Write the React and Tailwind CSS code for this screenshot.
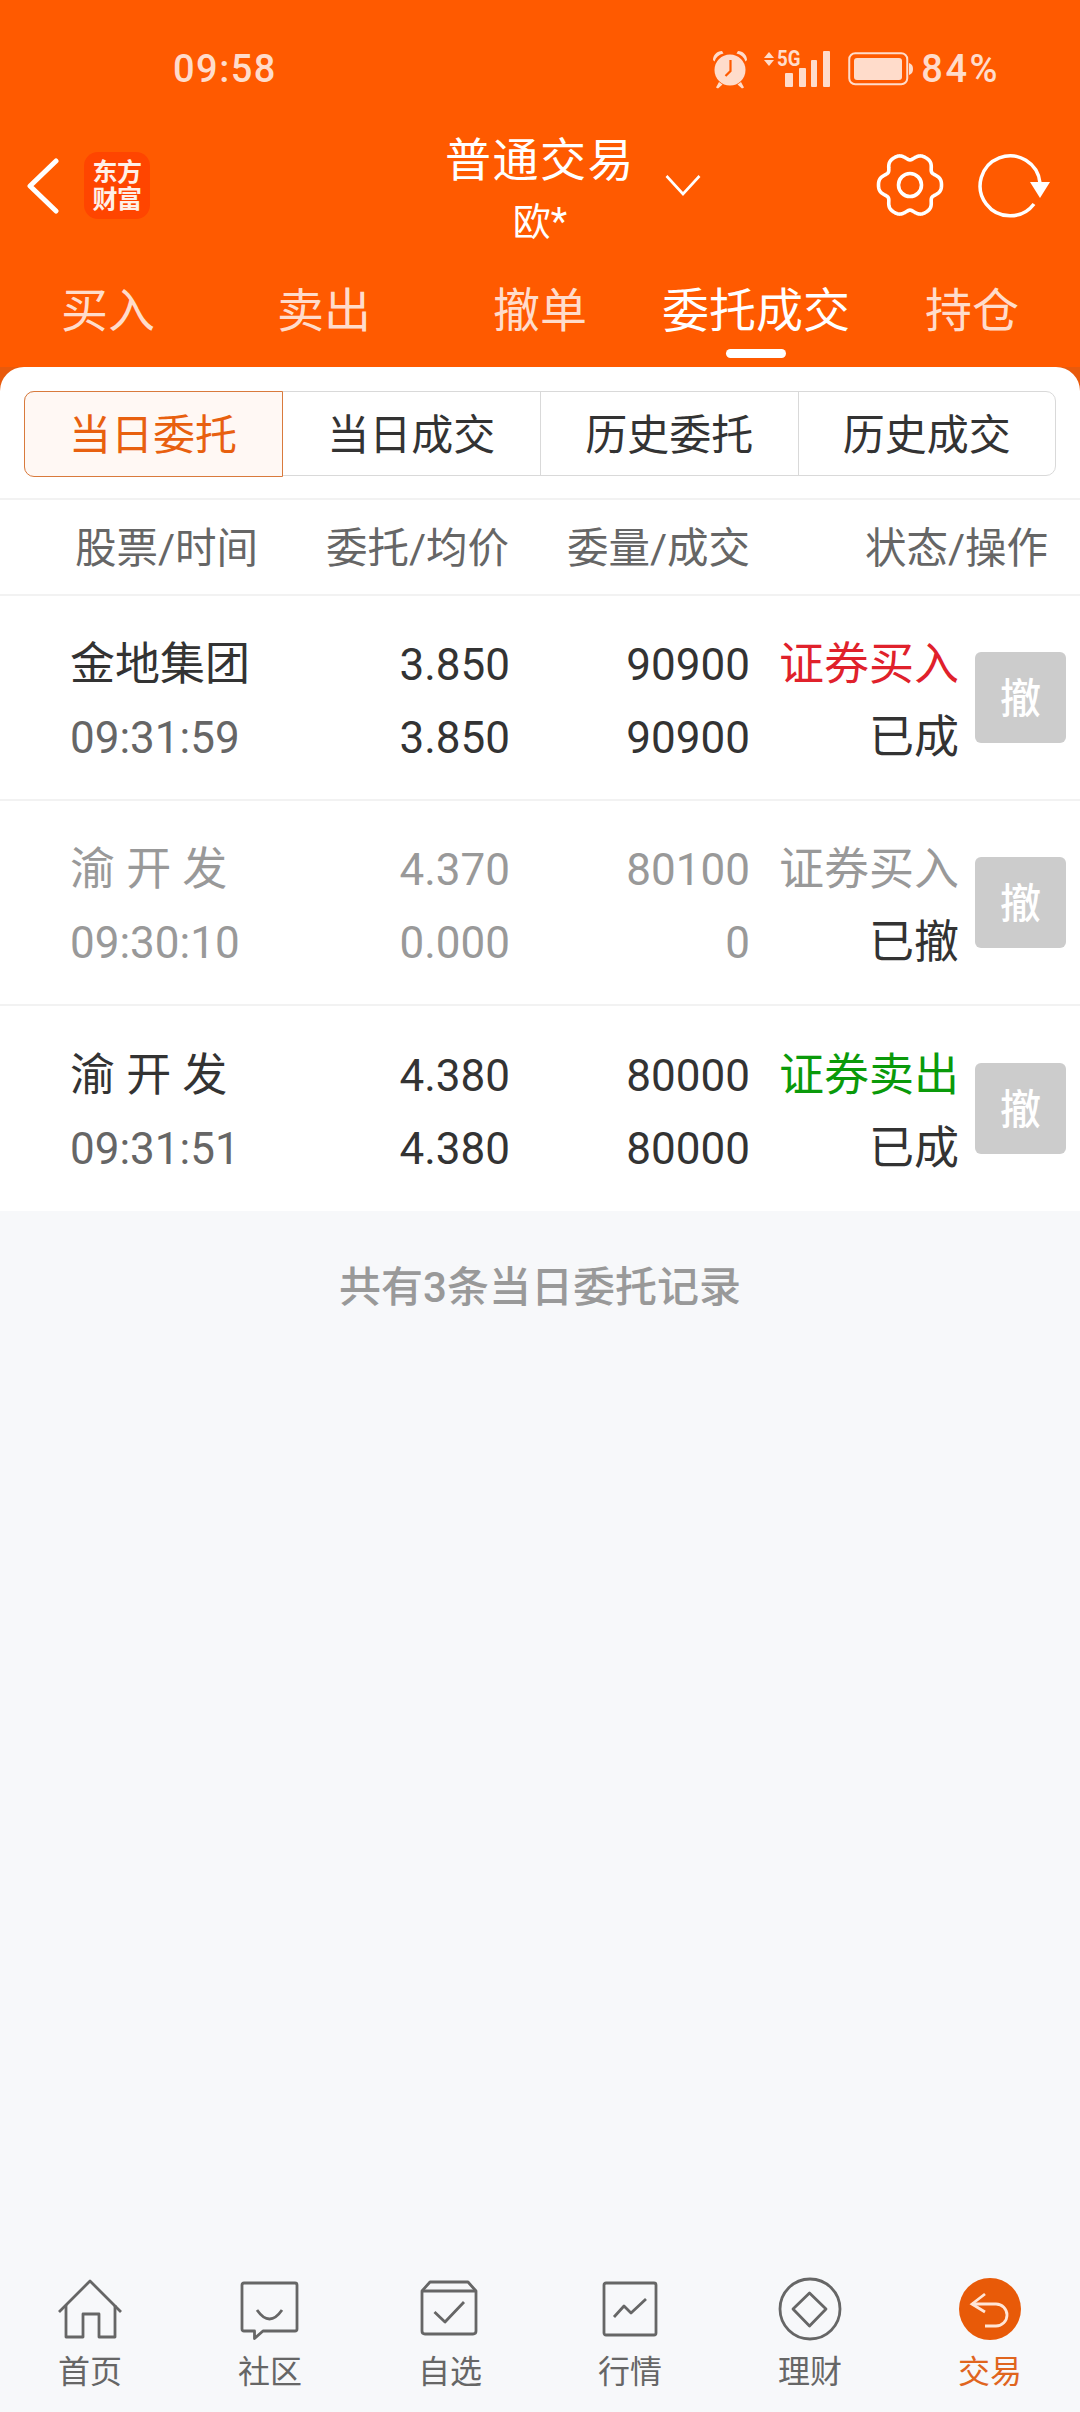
import React from 'react';

const FONT = 'Roboto, "Noto Sans CJK SC", sans-serif';

const topTabs = ['买入', '卖出', '撤单', '委托成交', '持仓'];
const segments = ['当日委托', '当日成交', '历史委托', '历史成交'];

const orders = [
  { name: '金地集团', time: '09:31:59', price: '3.850', avg: '3.850', qty: '90900', deal: '90900', side: '证券买入', sideColor: 'text-[#e0212b]', state: '已成' },
  { name: '渝 开 发', time: '09:30:10', price: '4.370', avg: '0.000', qty: '80100', deal: '0', side: '证券买入', sideColor: 'text-[#999999]', state: '已撤', dim: true },
  { name: '渝 开 发', time: '09:31:51', price: '4.380', avg: '4.380', qty: '80000', deal: '80000', side: '证券卖出', sideColor: 'text-[#0a9a0a]', state: '已成' },
];

// six soft lobes round the settings icon
const gearPath = () => {
  const pts = [];
  for (let i = 0; i < 180; i++) {
    const a = (i / 180) * Math.PI * 2;
    const r = 29 + 3.2 * Math.cos(6 * a) - 0.7 * Math.cos(12 * a);
    pts.push(`${(34 + r * Math.cos(a)).toFixed(2)} ${(34 + r * Math.sin(a)).toFixed(2)}`);
  }
  return `M${pts.join('L')}Z`;
};

const StatusIcons = () => (
  <div className="flex items-center">
    <svg width="38" height="40" viewBox="0 0 38 40" fill="#ffdccb">
      <circle cx="19" cy="21" r="15.5" />
      <path d="M2 11C2 6 6 2 11 2L12.5 4.5C8 5.5 5 8 3.5 12.5Z" />
      <path d="M36 11C36 6 32 2 27 2L25.500 4.500C30 5.500 33 8 34.500 12.500Z" />
      <path d="M8 33L5 38.500L7 39.500L11.500 35.500Z" />
      <path d="M30 33L33 38.500L31 39.500L26.500 35.500Z" />
      <path d="M19.500 11V22L14.500 27" fill="none" stroke="#ff5a00" strokeWidth="2.2" />
    </svg>
    <div className="relative ml-[14px] w-[68px] h-[38px]">
      <svg width="68" height="38" viewBox="0 0 68 38" fill="#ffdccb">
        <path d="M6 2L11 8H1Z" />
        <path d="M6 16L11 10H1Z" />
        <rect x="22" y="23" width="8" height="14" rx="1" />
        <rect x="36" y="18" width="7" height="19" rx="1" />
        <rect x="48" y="10" width="6" height="27" rx="1" />
        <rect x="60" y="1" width="7" height="36" rx="1" />
      </svg>
      <span className="absolute left-[14px] top-[-2px] text-[22px] leading-[22px] font-bold text-[#ffdccb] scale-x-[0.85] origin-left">5G</span>
    </div>
    <svg width="65" height="34" viewBox="0 0 65 34" className="ml-[17px]">
      <rect x="1.250" y="1.250" width="58" height="31" rx="6" fill="none" stroke="#ffdccb" strokeWidth="2" />
      <rect x="6" y="6" width="48" height="22" rx="3" fill="#ffdccb" />
      <path d="M61 11C64 12 65 14 65 17C65 20 64 22 61 23Z" fill="#ffdccb" />
    </svg>
    <span className="ml-[8px] text-[38px] leading-[40px] font-medium tracking-[2.5px] text-[#ffdccb]">84%</span>
  </div>
);

const NavIcon = ({ name }) => {
  const line = { fill: 'none', stroke: '#666666', strokeWidth: 2.8, strokeLinejoin: 'round' };
  if (name === 'home') {
    return (
      <svg width="64" height="64" viewBox="0 0 64 64" {...line}>
        <path d="M1 35L32 4L63 35" />
        <path d="M8 28V60H25V37H41V60H57V28" />
      </svg>
    );
  }
  if (name === 'chat') {
    return (
      <svg width="64" height="64" viewBox="0 0 64 64" {...line}>
        <path d="M6 6H57Q59 6 59 8V52Q59 54 57 54H25L16.500 61.500V54H6Q4 54 4 52V8Q4 6 6 6Z" />
        <path d="M19 33Q31.500 51 44 33" />
      </svg>
    );
  }
  if (name === 'watch') {
    return (
      <svg width="64" height="64" viewBox="0 0 64 64" {...line}>
        <path d="M12 5H50L58 14V54Q58 57 55 57H7Q4 57 4 54V14Z" />
        <path d="M4 14H58" />
        <path d="M16.500 35L27 45L46 25" />
      </svg>
    );
  }
  if (name === 'chart') {
    return (
      <svg width="64" height="64" viewBox="0 0 64 64" {...line}>
        <rect x="6" y="6" width="52" height="52" rx="2" />
        <path d="M16 40L26 29L33 36L48 22" />
      </svg>
    );
  }
  if (name === 'finance') {
    return (
      <svg width="64" height="64" viewBox="0 0 64 64" {...line}>
        <circle cx="32" cy="32" r="30" />
        <path d="M31.500 16L48 32L31.500 49L15 32Z" />
      </svg>
    );
  }
  return (
    <svg width="64" height="64" viewBox="0 0 64 64" fill="none" stroke="#ffe5d6" strokeWidth="2.8">
      <circle cx="32" cy="32" r="31" fill="#e85a08" stroke="none" />
      <path d="M27 17L14 27L27 35" />
      <path d="M14 27H38A11 11 0 0 1 38 49H27" />
    </svg>
  );
};

const navItems = [
  { icon: 'home', label: '首页' },
  { icon: 'chat', label: '社区' },
  { icon: 'watch', label: '自选' },
  { icon: 'chart', label: '行情' },
  { icon: 'finance', label: '理财' },
  { icon: 'trade', label: '交易', active: true },
];

const App = () => {
  return (
    <div className="w-[1080px] h-[2412px] flex flex-col bg-[#f7f8fa] overflow-hidden" style={{ fontFamily: FONT }}>
      {/* Orange header */}
      <div className="bg-[#ff5a00] h-[367px] shrink-0 flex flex-col">
        <div className="h-[100px] pl-[173px] pr-[80px] pt-[49px] flex items-start justify-between">
          <span className="text-[38px] leading-[40px] font-medium tracking-[1.5px] text-[#ffdccb]">09:58</span>
          <StatusIcons />
        </div>

        <div className="h-[146px] grid grid-cols-[1fr_auto_1fr] items-start">
          <div className="flex items-center pl-[26px] pt-[52px]">
            <svg width="34" height="56" viewBox="0 0 34 56" fill="none" stroke="#ffffff" strokeWidth="5" strokeLinecap="round" strokeLinejoin="round" className="shrink-0">
              <path d="M30 3L4 28L30 53" />
            </svg>
            <div className="ml-[24px] w-[66px] h-[67px] shrink-0 rounded-[14px] bg-[#ff4500] flex flex-col items-center justify-center text-[#fff0e8] text-[25px] leading-[27px] font-bold tracking-[-0.500px]">
              <span>东方</span>
              <span>财富</span>
            </div>
          </div>
          <div className="flex flex-col items-center text-white pt-[30px]">
            <span className="text-[46px] leading-[60px] tracking-[1.500px]">普通交易</span>
            <span className="text-[38px] leading-[60px] mt-[2px]">欧*</span>
          </div>
          <div className="flex items-center pt-[51px]">
            <svg width="36" height="22" viewBox="0 0 36 22" fill="none" stroke="#ffffff" strokeWidth="2.6" className="ml-[30px]">
              <path d="M1.500 2L18 20L34.500 2" />
            </svg>
            <svg width="68" height="68" viewBox="0 0 68 68" fill="none" stroke="#ffffff" strokeWidth="3.6" strokeLinejoin="round" className="ml-[175px]">
              <path d={gearPath()} />
              <circle cx="34" cy="34" r="11.500" />
            </svg>
            <svg width="72" height="68" viewBox="0 0 72 68" fill="none" className="ml-[34px]">
              <path d="M56 53A30 30 0 1 1 62 32" stroke="#ffffff" strokeWidth="3.500" />
              <path d="M52 31H72L62 47Z" fill="#ffffff" />
            </svg>
          </div>
        </div>

        <div className="grid grid-cols-5 h-[121px] pt-[35px]">
          {topTabs.map((tab, i) => (
            <div key={tab} className="flex flex-col items-center">
              <span className={`text-[47px] leading-[60px] ${i === 3 ? 'text-white' : 'text-[#ffdccb]'}`}>{tab}</span>
              {i === 3 && <span className="mt-[8px] w-[60px] h-[9px] rounded-full bg-white" />}
            </div>
          ))}
        </div>
      </div>

      {/* Order list */}
      <div className="bg-[#e85a0c] shrink-0">
        <div className="bg-white rounded-t-[24px] pt-[24px]">
          <div className="mx-[24px] h-[85px] grid grid-cols-4 border-[1.5px] border-[#d9d9d9] rounded-[10px]">
            {segments.map((seg, i) => (
              <div
                key={seg}
                className={`flex items-center justify-center pt-[4px] text-[42px] ${i === 0 ? 'm-[-1.5px] mr-0 bg-[#fff8f4] border-[1.5px] border-[#d97a3c] rounded-l-[10px] text-[#e8600f]' : 'text-[#333333]'} ${i > 1 ? 'border-l-[1.5px] border-[#d9d9d9]' : ''}`}
              >
                {seg}
              </div>
            ))}
          </div>

          <div className="mt-[22px] h-[98px] border-y-2 border-[#f2f2f2] flex items-center pt-[5px] text-[41.5px] text-[#666666] whitespace-nowrap">
            <span className="w-[258px] pl-[75px]">股票/时间</span>
            <span className="w-[251px] text-right">委托/均价</span>
            <span className="w-[241px] text-right">委量/成交</span>
            <span className="w-[298px] text-right">状态/操作</span>
          </div>

          {orders.map((o, idx) => (
            <div key={idx} className={`h-[205px] pl-[70px] flex items-center ${idx < 2 ? 'border-b-2 border-[#f2f2f2]' : ''}`}>
              <div className="grid grid-cols-[280px_160px_240px_209px] grid-rows-[73px_73px] items-center pt-[7px] text-[44px] leading-[60px]">
                <span className={`text-[45px] ${o.dim ? 'text-[#999999]' : 'text-[#333333]'}`}>{o.name}</span>
                <span className={`text-right ${o.dim ? 'text-[#999999]' : 'text-[#333333]'}`}>{o.price}</span>
                <span className={`text-right ${o.dim ? 'text-[#999999]' : 'text-[#333333]'}`}>{o.qty}</span>
                <span className={`text-right text-[45px] ${o.sideColor}`}>{o.side}</span>
                <span className={o.dim ? 'text-[#999999]' : 'text-[#666666]'}>{o.time}</span>
                <span className={`text-right ${o.dim ? 'text-[#999999]' : 'text-[#333333]'}`}>{o.avg}</span>
                <span className={`text-right ${o.dim ? 'text-[#999999]' : 'text-[#333333]'}`}>{o.deal}</span>
                <span className="text-right text-[45px] text-[#333333]">{o.state}</span>
              </div>
              <button className="ml-[16px] w-[91px] h-[91px] pt-[4px] rounded-[6px] bg-[#cccccc] text-white text-[41px] font-medium">撤</button>
            </div>
          ))}
        </div>
      </div>

      <div className="flex-1 text-center pt-[47px]">
        <span className="text-[42px] leading-[60px] font-medium text-[#999999]">共有3条当日委托记录</span>
      </div>

      {/* Bottom nav */}
      <div className="h-[135px] shrink-0 grid grid-cols-6">
        {navItems.map(item => (
          <div key={item.label} className="flex flex-col items-center">
            <NavIcon name={item.icon} />
            <span className={`mt-[11px] text-[32px] leading-[40px] ${item.active ? 'text-[#e0651e]' : 'text-[#666666]'}`}>{item.label}</span>
          </div>
        ))}
      </div>
    </div>
  );
};

export default App;
